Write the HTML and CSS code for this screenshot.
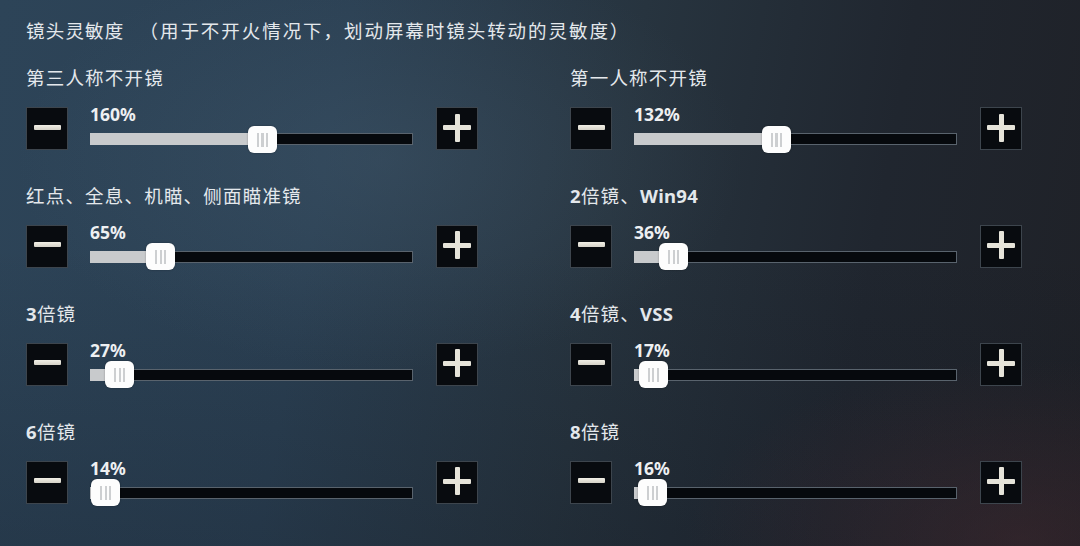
FILE: index.html
```html
<!DOCTYPE html>
<html lang="zh-CN">
<head>
<meta charset="utf-8">
<title>镜头灵敏度</title>
<link rel="stylesheet" href="styles.css">
</head>
<body>
<div class="page">
  <div class="header"><span>镜头灵敏度</span><span class="note">（用于不开火情况下，划动屏幕时镜头转动的灵敏度）</span></div>
  <div class="grid">
    <div class="item">
      <div class="label">第三人称不开镜</div>
      <div class="ctrl">
        <div class="btn"><span class="minus"></span></div>
        <div class="slider"><div class="pct">160%</div><div class="track" style="--v:0.5333"><div class="fill"></div><div class="thumb"></div></div></div>
        <div class="btn"><span class="plus"></span></div>
      </div>
    </div>
    <div class="item">
      <div class="label">第一人称不开镜</div>
      <div class="ctrl">
        <div class="btn"><span class="minus"></span></div>
        <div class="slider"><div class="pct">132%</div><div class="track" style="--v:0.44"><div class="fill"></div><div class="thumb"></div></div></div>
        <div class="btn"><span class="plus"></span></div>
      </div>
    </div>
    <div class="item">
      <div class="label">红点、全息、机瞄、侧面瞄准镜</div>
      <div class="ctrl">
        <div class="btn"><span class="minus"></span></div>
        <div class="slider"><div class="pct">65%</div><div class="track" style="--v:0.2167"><div class="fill"></div><div class="thumb"></div></div></div>
        <div class="btn"><span class="plus"></span></div>
      </div>
    </div>
    <div class="item">
      <div class="label"><span class="lat">2</span>倍镜、<span class="lat">Win94</span></div>
      <div class="ctrl">
        <div class="btn"><span class="minus"></span></div>
        <div class="slider"><div class="pct">36%</div><div class="track" style="--v:0.12"><div class="fill"></div><div class="thumb"></div></div></div>
        <div class="btn"><span class="plus"></span></div>
      </div>
    </div>
    <div class="item">
      <div class="label"><span class="lat">3</span>倍镜</div>
      <div class="ctrl">
        <div class="btn"><span class="minus"></span></div>
        <div class="slider"><div class="pct">27%</div><div class="track" style="--v:0.09"><div class="fill"></div><div class="thumb"></div></div></div>
        <div class="btn"><span class="plus"></span></div>
      </div>
    </div>
    <div class="item">
      <div class="label"><span class="lat">4</span>倍镜、<span class="lat">VSS</span></div>
      <div class="ctrl">
        <div class="btn"><span class="minus"></span></div>
        <div class="slider"><div class="pct">17%</div><div class="track" style="--v:0.0567"><div class="fill"></div><div class="thumb"></div></div></div>
        <div class="btn"><span class="plus"></span></div>
      </div>
    </div>
    <div class="item">
      <div class="label"><span class="lat">6</span>倍镜</div>
      <div class="ctrl">
        <div class="btn"><span class="minus"></span></div>
        <div class="slider"><div class="pct">14%</div><div class="track" style="--v:0.0467"><div class="fill"></div><div class="thumb"></div></div></div>
        <div class="btn"><span class="plus"></span></div>
      </div>
    </div>
    <div class="item">
      <div class="label"><span class="lat">8</span>倍镜</div>
      <div class="ctrl">
        <div class="btn"><span class="minus"></span></div>
        <div class="slider"><div class="pct">16%</div><div class="track" style="--v:0.0533"><div class="fill"></div><div class="thumb"></div></div></div>
        <div class="btn"><span class="plus"></span></div>
      </div>
    </div>
  </div>
</div>
</body>
</html>
```
FILE: styles.css
```css
* { box-sizing: border-box; }
html, body { margin: 0; padding: 0; }
body {
  width: 1080px;
  height: 546px;
  overflow: hidden;
  font-family: "Noto Sans CJK SC", "Noto Sans", sans-serif;
  color: #e4e8ec;
  background:
    radial-gradient(ellipse 520px 300px at 380px 160px, rgba(80,105,125,0.26), rgba(80,105,125,0) 70%),
    radial-gradient(ellipse 480px 260px at 1020px 540px, rgba(80,45,50,0.40), rgba(80,45,50,0) 70%),
    linear-gradient(180deg, rgba(10,15,25,0) 45%, rgba(10,15,25,0.20) 100%),
    linear-gradient(100deg, #2d4458 0%, #2b4053 30%, #27343f 55%, #20262f 78%, #1f2127 100%);
}
.page {
  padding: 18px 0 0 26px;
}
.header {
  display: flex;
  font-size: 18.5px;
  line-height: 24px;
  letter-spacing: 1.2px;
  white-space: nowrap;
}
.note {
  margin-left: 15px;
  letter-spacing: 1.95px;
}
.grid {
  margin-top: 23px;
  display: grid;
  grid-template-columns: 452px 452px;
  column-gap: 92px;
  row-gap: 32.9px;
}
.label {
  height: 24px;
  font-size: 18.5px;
  line-height: 24px;
  letter-spacing: 1.2px;
  white-space: nowrap;
}
.lat {
  font-family: "Noto Sans", "Liberation Sans", sans-serif;
  font-weight: 700;
  letter-spacing: 0.3px;
}
.ctrl {
  margin-top: 18px;
  display: flex;
  align-items: flex-start;
  height: 43px;
}
.btn {
  flex: none;
  width: 42px;
  height: 43px;
  background: #080b0f;
  border: 1px solid rgba(150,165,180,0.38);
  display: flex;
  align-items: center;
  justify-content: center;
}
.minus {
  display: block;
  width: 27px;
  height: 5px;
  margin-top: -3px;
  background: linear-gradient(180deg, #f1efe6, #d6d3c8);
  border-radius: 1px;
}
.plus {
  position: relative;
  display: block;
  width: 28px;
  height: 28px;
  margin-top: -2px;
}
.plus::before, .plus::after {
  content: "";
  position: absolute;
  background: #e6e4da;
  border-radius: 1px;
}
.plus::before { left: 0; right: 0; top: 11.5px; height: 5px; }
.plus::after { top: 0; bottom: 0; left: 11.5px; width: 5px; }
.slider {
  flex: none;
  width: 323px;
  margin: 0 23px 0 22px;
  display: flex;
  flex-direction: column;
}
.pct {
  margin-top: -2px;
  height: 18px;
  line-height: 18px;
  font-family: "Noto Sans", "Liberation Sans", sans-serif;
  font-weight: 700;
  font-size: 17.5px;
  color: #eef0f2;
  padding-left: 0;
}
.track {
  position: relative;
  margin-top: 10px;
  height: 12px;
  background: #06090d;
  border: 1px solid #59636d;
}
.fill {
  position: absolute;
  left: -1px;
  top: -1px;
  bottom: -1px;
  width: calc(var(--v) * 100%);
  background: #c8cacc;
}
.thumb {
  position: absolute;
  top: 50%;
  left: clamp(-1px, calc(var(--v) * 100% - 14.5px), calc(100% - 28px));
  width: 29px;
  height: 27px;
  margin-top: -13.5px;
  border-radius: 6px;
  background: #fdfdfd;
  box-shadow: 0 0 2px rgba(0,0,0,0.35);
}
.thumb::after {
  content: "";
  position: absolute;
  left: 9px;
  top: 7px;
  width: 11px;
  height: 14px;
  background: repeating-linear-gradient(90deg, #cdcfd1 0 2px, transparent 2px 4.5px);
}
```
